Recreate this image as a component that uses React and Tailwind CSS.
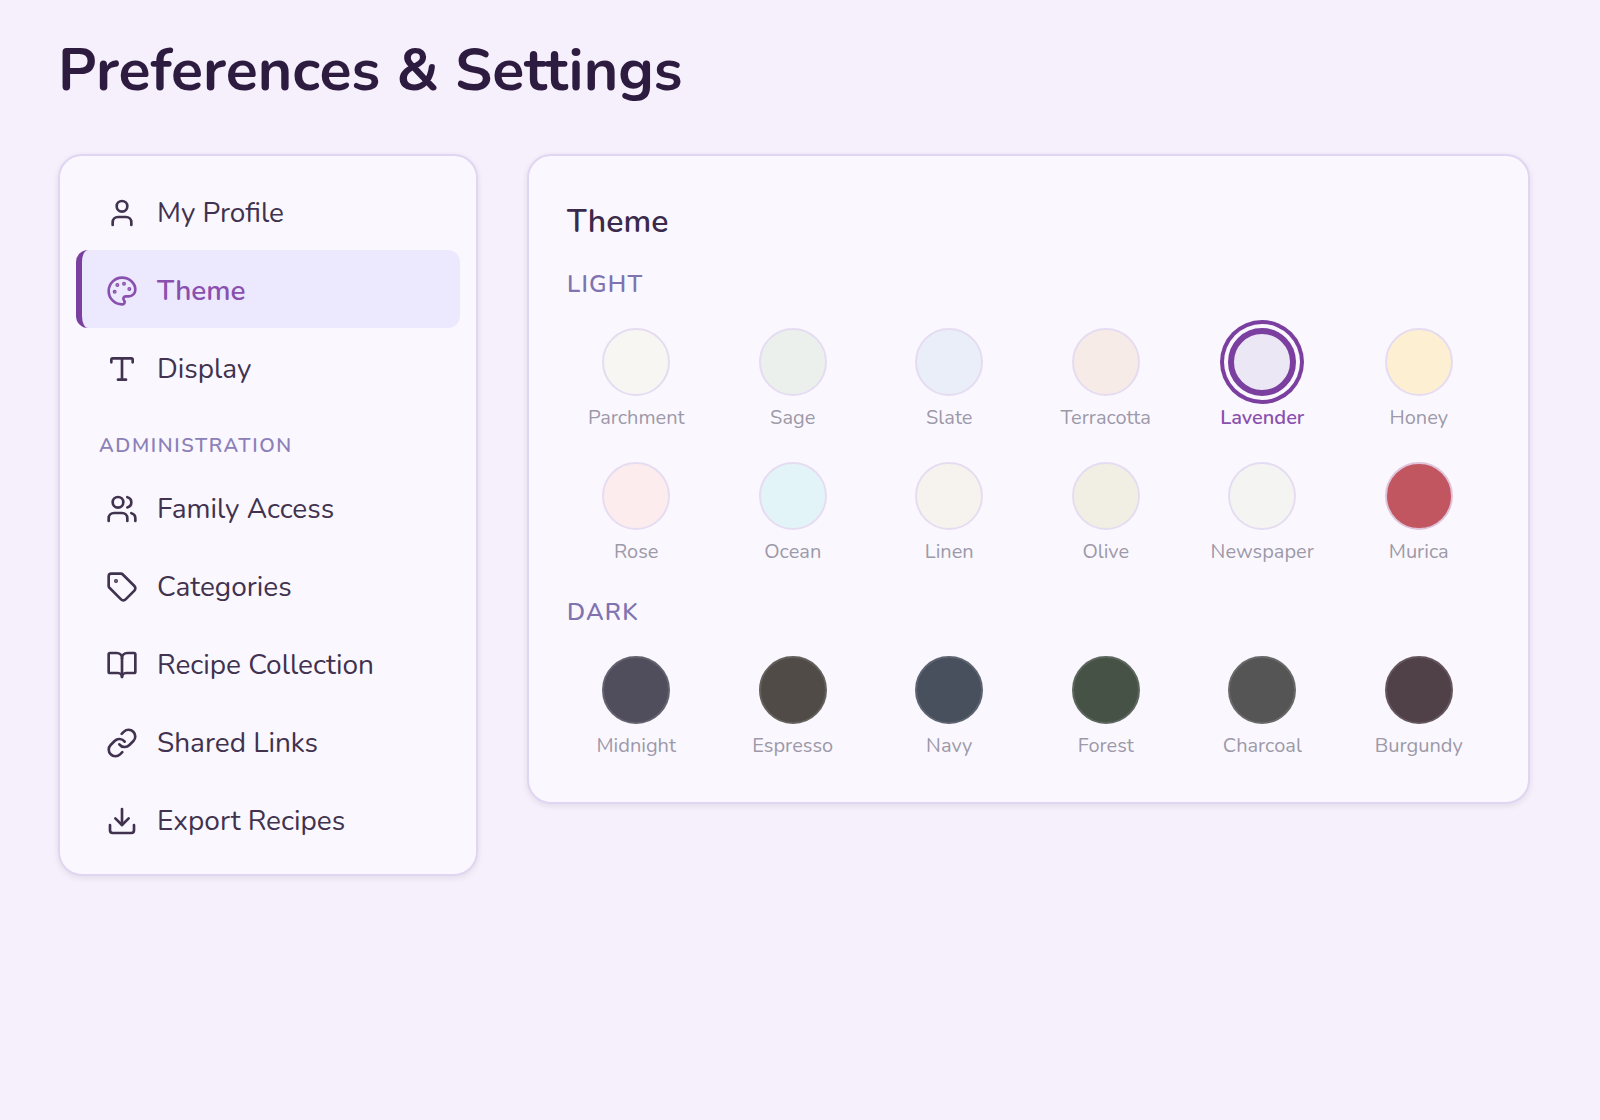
import React, { useState } from "react";
import {
  User,
  Palette,
  Type,
  Users,
  Tag,
  BookOpen,
  Link,
  Download,
} from "lucide-react";

const personalItems = [
  { label: "My Profile", icon: User },
  { label: "Theme", icon: Palette },
  { label: "Display", icon: Type },
];

const adminItems = [
  { label: "Family Access", icon: Users },
  { label: "Categories", icon: Tag },
  { label: "Recipe Collection", icon: BookOpen },
  { label: "Shared Links", icon: Link },
  { label: "Export Recipes", icon: Download },
];

const lightThemes = [
  { name: "Parchment", color: "bg-[#f8f6f2] border-[#e6dcf2]" },
  { name: "Sage", color: "bg-[#ebf0ec] border-[#e6dcf2]" },
  { name: "Slate", color: "bg-[#eaeef8] border-[#e6dcf2]" },
  { name: "Terracotta", color: "bg-[#f6ebe6] border-[#e6dcf2]" },
  { name: "Lavender", color: "bg-[#ebe7f5] border-[#e6dcf2]" },
  { name: "Honey", color: "bg-[#fdf0d2] border-[#e6dcf2]" },
  { name: "Rose", color: "bg-[#fdecee] border-[#e6dcf2]" },
  { name: "Ocean", color: "bg-[#e3f4f8] border-[#e6dcf2]" },
  { name: "Linen", color: "bg-[#f6f3ee] border-[#e6dcf2]" },
  { name: "Olive", color: "bg-[#f1efe3] border-[#e6dcf2]" },
  { name: "Newspaper", color: "bg-[#f4f4f2] border-[#e6dcf2]" },
  { name: "Murica", color: "bg-[#c15560] border-[#dfc3da]" },
];

const darkThemes = [
  { name: "Midnight", color: "bg-[#504e5c] border-[#64626e]" },
  { name: "Espresso", color: "bg-[#504b47] border-[#64605c]" },
  { name: "Navy", color: "bg-[#48505e] border-[#5d6471]" },
  { name: "Forest", color: "bg-[#475247] border-[#5d675e]" },
  { name: "Charcoal", color: "bg-[#555555] border-[#696969]" },
  { name: "Burgundy", color: "bg-[#504047] border-[#64565c]" },
];

const NavItem = ({ item, active, onClick }) => {
  const Icon = item.icon;
  return (
    <li>
      <button
        onClick={onClick}
        className={`flex h-[78px] w-full items-center gap-[19px] rounded-xl border-l-[6px] pt-[3px] pl-6 text-left text-[28px] leading-10 ${
          active
            ? "border-[#7b3fa0] bg-[#ece9fe] font-semibold text-[#8a50ae]"
            : "border-transparent text-[#41324f]"
        }`}
      >
        <Icon className="size-8 shrink-0" />
        {item.label}
      </button>
    </li>
  );
};

const ThemeGrid = ({ themes, selected, onSelect }) => (
  <div className="grid grid-cols-6 gap-x-[18px] gap-y-[30px]">
    {themes.map((theme) => (
      <button
        key={theme.name}
        aria-pressed={selected === theme.name}
        onClick={() => onSelect(theme.name)}
        className="flex flex-col items-center gap-2"
      >
        <span
          className={`size-[68px] rounded-full ${
            selected === theme.name
              ? "border-[6px] border-[#7b3fa0] bg-[#ebe7f5] ring-4 ring-[#7b3fa0] ring-offset-4 ring-offset-[#faf8fe]"
              : `border-2 ${theme.color}`
          }`}
        />
        <span
          className={`text-[20px] leading-7 ${
            selected === theme.name
              ? "font-semibold text-[#8a50ae]"
              : "text-[#9d99a9]"
          }`}
        >
          {theme.name}
        </span>
      </button>
    ))}
  </div>
);

const App = () => {
  const [section, setSection] = useState("Theme");
  const [theme, setTheme] = useState("Lavender");

  const renderItem = (item) => (
    <NavItem
      key={item.label}
      item={item}
      active={section === item.label}
      onClick={() => setSection(item.label)}
    />
  );

  return (
    <div className="min-h-screen bg-[#f5f0fb] pt-[31px] pr-[70px] pl-[58px] font-['Nunito','Lato',sans-serif] text-[#2d1b40]">
      <h1 className="mb-[43px] text-[59px] leading-[80px] font-bold">
        Preferences &amp; Settings
      </h1>

      <div className="flex items-start gap-[49px]">
        {/* Sidebar */}
        <nav className="w-[420px] shrink-0 rounded-3xl border-2 border-[#e0d5f2] bg-[#faf8fe] px-4 pt-4 pb-4 shadow-[0_2px_6px_rgba(45,27,64,0.09)]">
          <ul>{personalItems.map(renderItem)}</ul>
          <h2 className="px-[23px] pt-[26px] pb-2 text-[20px] leading-7 font-semibold tracking-[0.08em] text-[#8b80b8] uppercase">
            Administration
          </h2>
          <ul>{adminItems.map(renderItem)}</ul>
        </nav>

        {/* Theme picker */}
        <main className="flex-1 rounded-3xl border-2 border-[#e0d5f2] bg-[#faf8fe] pt-[46px] pr-10 pb-[42px] pl-[38px] shadow-[0_2px_6px_rgba(45,27,64,0.09)]">
          <h2 className="text-[32px] leading-10 font-semibold text-[#3a2a4b]">
            Theme
          </h2>
          <h3 className="mt-[26px] mb-7 text-[24px] leading-8 font-semibold tracking-wider text-[#7f73b0] uppercase">
            Light
          </h3>
          <ThemeGrid themes={lightThemes} selected={theme} onSelect={setTheme} />
          <h3 className="mt-[30px] mb-7 text-[24px] leading-8 font-semibold tracking-wider text-[#7f73b0] uppercase">
            Dark
          </h3>
          <ThemeGrid themes={darkThemes} selected={theme} onSelect={setTheme} />
        </main>
      </div>
    </div>
  );
};

export default App;
